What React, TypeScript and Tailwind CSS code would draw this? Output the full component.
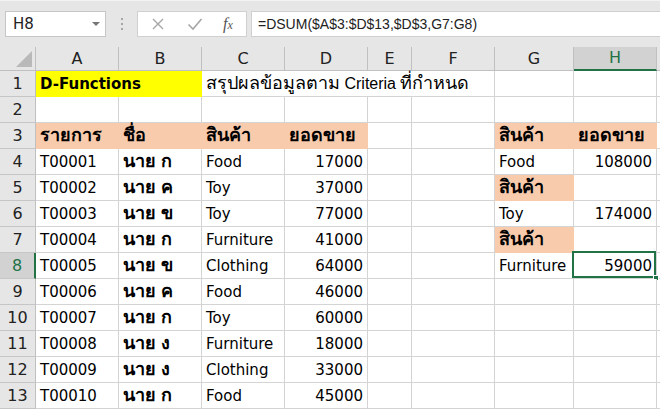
import React from "react";

const COLS = ["A", "B", "C", "D", "E", "F", "G", "H"];
const PEACH = "bg-[#f8cbad] border-[#f8cbad]";

type Cell = {
  text?: string;
  span?: number;
  bold?: boolean;
  right?: boolean;
  fill?: string;
  selected?: boolean;
  narrow?: boolean;
};

const DATA: [string, string, string, number][] = [
  ["T00001", "นาย ก", "Food", 17000],
  ["T00002", "นาย ค", "Toy", 37000],
  ["T00003", "นาย ข", "Toy", 77000],
  ["T00004", "นาย ก", "Furniture", 41000],
  ["T00005", "นาย ข", "Clothing", 64000],
  ["T00006", "นาย ค", "Food", 46000],
  ["T00007", "นาย ก", "Toy", 60000],
  ["T00008", "นาย ง", "Furniture", 18000],
  ["T00009", "นาย ง", "Clothing", 33000],
  ["T00010", "นาย ก", "Food", 45000],
];

// G/H summary block, keyed by row number
const SIDE: Record<number, [Cell, Cell]> = {
  3: [{ text: "สินค้า", bold: true, fill: PEACH }, { text: "ยอดขาย", bold: true, fill: PEACH }],
  4: [{ text: "Food" }, { text: "108000", right: true }],
  5: [{ text: "สินค้า", bold: true, fill: PEACH }, {}],
  6: [{ text: "Toy" }, { text: "174000", right: true }],
  7: [{ text: "สินค้า", bold: true, fill: PEACH }, {}],
  8: [{ text: "Furniture" }, { text: "59000", right: true, selected: true }],
};

function buildRows(): Cell[][] {
  const rows: Cell[][] = [];
  rows.push([
    { text: "D-Functions", span: 2, bold: true, fill: "bg-[#ffff00] border-[#ffff00]" },
    { text: "สรุปผลข้อมูลตาม Criteria ที่กำหนด", span: 4, narrow: true },
    {},
    {},
  ]);
  rows.push(COLS.map(() => ({})));
  rows.push([
    { text: "รายการ", bold: true, fill: PEACH },
    { text: "ชื่อ", bold: true, fill: PEACH },
    { text: "สินค้า", bold: true, fill: PEACH },
    { text: "ยอดขาย", bold: true, fill: PEACH },
    {},
    {},
    ...SIDE[3],
  ]);
  DATA.forEach(([id, name, item, amount], i) => {
    const r = i + 4;
    rows.push([
      { text: id },
      { text: name, bold: true },
      { text: item },
      { text: String(amount), right: true },
      {},
      {},
      ...(SIDE[r] ?? [{}, {}]),
    ]);
  });
  return rows;
}

// Thai runs get a larger size so they match the Leelawadee look of the sheet
function Mixed({ text, narrow }: { text: string; narrow?: boolean }) {
  const parts = text.split(/([\u0E00-\u0E7F]+)/);
  return (
    <>
      {parts.map((p, i) =>
        /[\u0E00-\u0E7F]/.test(p) ? (
          <span key={i} className="text-[18px] leading-[20px]">
            {p}
          </span>
        ) : (
          <span
            key={i}
            className={narrow ? "text-[16px]" : ""}
            style={narrow ? { fontFamily: '"Liberation Sans", sans-serif' } : undefined}
          >
            {p}
          </span>
        )
      )}
    </>
  );
}

function GridCell({ cell }: { cell: Cell }) {
  const span =
    cell.span === 2 ? "col-span-2" : cell.span === 4 ? "col-span-4" : "";
  return (
    <div
      className={`relative h-[26px] overflow-visible whitespace-nowrap border-b border-r px-[4px] pt-[2px] text-[15px] leading-[22px] text-black ${
        cell.fill ?? "border-[#d4d4d4] bg-white"
      } ${span} ${cell.right ? "text-right" : ""} ${cell.bold ? "font-bold" : ""}`}
    >
      {cell.text && <Mixed text={cell.text} narrow={cell.narrow} />}
      {cell.selected && (
        <>
          <div className="absolute -left-[2px] -top-[2px] bottom-0 right-0 border-2 border-[#217346]" />
          <div className="absolute -bottom-[3px] -right-[3px] h-[6px] w-[6px] border border-white bg-[#217346]" />
        </>
      )}
    </div>
  );
}

function FormulaBar() {
  return (
    <div className="flex h-[47px] items-start border-t border-[#f2f2f2] bg-[#e6e6e6] pt-[10px]">
      <div className="ml-[5px] flex h-[26px] w-[101px] items-center justify-between border border-[#c6c6c6] bg-white pl-[7px] pr-[5px] text-[15px] text-[#222]">
        <span>H8</span>
        <span className="h-0 w-0 border-x-[4px] border-t-[4px] border-x-transparent border-t-[#777]" />
      </div>
      <div className="flex h-[26px] w-[31px] flex-col items-center justify-center gap-[3px]">
        <span className="h-[2px] w-[2px] bg-[#a6a6a6]" />
        <span className="h-[2px] w-[2px] bg-[#a6a6a6]" />
        <span className="h-[2px] w-[2px] bg-[#a6a6a6]" />
      </div>
      <div className="flex h-[26px] w-[110px] items-center border border-[#d0d0d0] bg-white">
        <svg width="14" height="14" viewBox="0 0 14 14" className="ml-[13px]">
          <path d="M2 2 L12 12 M12 2 L2 12" stroke="#a6a6a6" strokeWidth="1.4" />
        </svg>
        <svg width="16" height="14" viewBox="0 0 16 14" className="ml-[22px]">
          <path d="M1.5 7.5 L6 12 L14.5 2" stroke="#a6a6a6" strokeWidth="1.6" fill="none" />
        </svg>
        <span
          className="ml-[20px] text-[16px] italic text-[#555]"
          style={{ fontFamily: '"Liberation Serif", serif' }}
        >
          f<span className="text-[12px]">x</span>
        </span>
      </div>
      <div
        className="ml-[4px] flex h-[26px] flex-1 items-center border border-r-0 border-[#d0d0d0] bg-white pl-[6px] text-[14px] text-[#222]"
        style={{ fontFamily: '"Liberation Sans", sans-serif' }}
      >
        =DSUM($A$3:$D$13,$D$3,G7:G8)
      </div>
    </div>
  );
}

export default function App() {
  const rows = buildRows();
  return (
    <div
      className="h-[411px] w-[660px] overflow-hidden bg-white"
      style={{ fontFamily: '"DejaVu Sans", "Noto Sans", sans-serif' }}
    >
      <FormulaBar />
      <div className="grid grid-cols-[36px_83px_83px_83px_83px_44px_83px_79px_83px_1fr]">
        {/* column headers */}
        <div className="relative h-[24px] border-b border-r border-[#c0c0c0] bg-[#e6e6e6]">
          <svg width="16" height="16" className="absolute bottom-[3px] right-[3px]">
            <path d="M16 0 L16 16 L0 16 Z" fill="#b9b9b9" />
          </svg>
        </div>
        {COLS.map((c) => (
          <div
            key={c}
            className={`flex h-[24px] items-center justify-center border-r text-[16px] ${
              c === "H"
                ? "border-b-2 border-b-[#217346] border-r-[#c0c0c0] bg-[#d2d2d2] text-[#217346]"
                : "border-b border-[#c0c0c0] bg-[#e6e6e6] text-[#222]"
            }`}
          >
            {c}
          </div>
        ))}
        <div className="h-[24px] border-b border-[#c0c0c0] bg-[#e6e6e6]" />

        {rows.map((row, i) => {
          const n = i + 1;
          return (
            <React.Fragment key={n}>
              <div
                className={`flex h-[26px] items-center justify-center border-b border-[#c6c6c6] text-[16px] ${
                  n === 8
                    ? "border-r-2 border-r-[#217346] bg-[#d2d2d2] text-[#217346]"
                    : "border-r border-r-[#c0c0c0] bg-[#e6e6e6] text-[#222]"
                }`}
              >
                {n}
              </div>
              {row.map((cell, j) => (
                <GridCell key={j} cell={cell} />
              ))}
              <div className="h-[26px] border-b border-[#d4d4d4] bg-white" />
            </React.Fragment>
          );
        })}
      </div>
    </div>
  );
}
